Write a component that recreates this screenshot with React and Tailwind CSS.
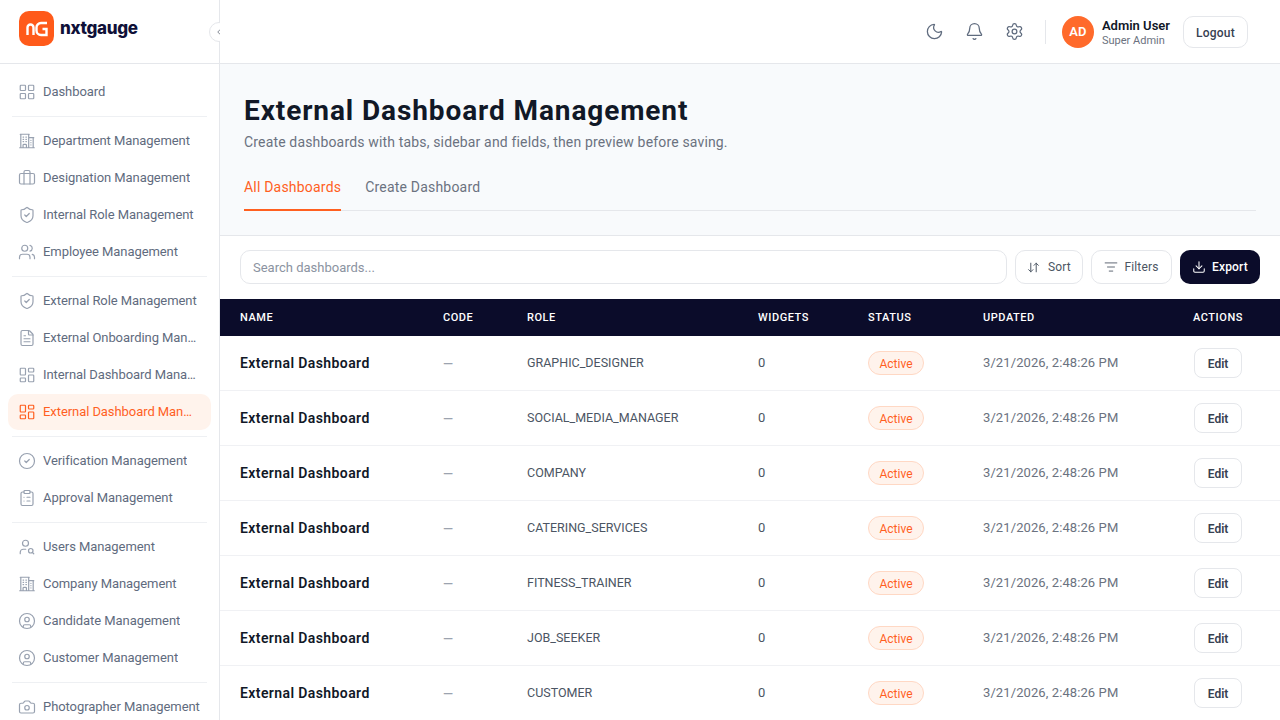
import {
  ArrowDownUp,
  Bell,
  Briefcase,
  Camera,
  ChevronLeft,
  CircleCheck,
  CircleUser,
  ClipboardList,
  Download,
  FileText,
  LayoutDashboard,
  LayoutGrid,
  ListFilter,
  Moon,
  Settings,
  ShieldCheck,
  UserSearch,
  Users,
} from "lucide-react";
import { HiOutlineBuildingOffice2 } from "react-icons/hi2";

const navGroups = [
  [{ label: "Dashboard", icon: LayoutGrid }],
  [
    { label: "Department Management", icon: HiOutlineBuildingOffice2 },
    { label: "Designation Management", icon: Briefcase },
    { label: "Internal Role Management", icon: ShieldCheck },
    { label: "Employee Management", icon: Users },
  ],
  [
    { label: "External Role Management", icon: ShieldCheck },
    { label: "External Onboarding Management", icon: FileText },
    { label: "Internal Dashboard Management", icon: LayoutDashboard },
    { label: "External Dashboard Management", icon: LayoutDashboard, active: true },
  ],
  [
    { label: "Verification Management", icon: CircleCheck },
    { label: "Approval Management", icon: ClipboardList },
  ],
  [
    { label: "Users Management", icon: UserSearch },
    { label: "Company Management", icon: HiOutlineBuildingOffice2 },
    { label: "Candidate Management", icon: CircleUser },
    { label: "Customer Management", icon: CircleUser },
  ],
  [{ label: "Photographer Management", icon: Camera }],
];

const roles = [
  "GRAPHIC_DESIGNER",
  "SOCIAL_MEDIA_MANAGER",
  "COMPANY",
  "CATERING_SERVICES",
  "FITNESS_TRAINER",
  "JOB_SEEKER",
  "CUSTOMER",
];

function NavItem({ item }) {
  const Icon = item.icon;
  return (
    <div
      className={`flex h-9 items-center gap-[7px] rounded-[10px] pl-[10px] text-[13px] tracking-[-0.07px] ${
        item.active ? "bg-[#fff3ec] pr-[14px] text-[#ff5f1f]" : "pr-[10px] text-[#5f6b7e]"
      }`}
    >
      <Icon
        size={18}
        strokeWidth={1.6}
        className={`shrink-0 ${item.active ? "text-[#ff5f1f]" : "text-[#98a1b0]"}`}
      />
      <span className="truncate">{item.label}</span>
    </div>
  );
}

function Sidebar() {
  return (
    <aside className="relative flex w-[220px] shrink-0 flex-col border-r border-[#e5e7eb] bg-white">
      <div className="flex h-[64px] shrink-0 items-center gap-[6px] border-b border-[#e5e7eb] pb-[6px] pl-[19px]">
        <svg width="35" height="35" viewBox="0 0 35 35">
          <rect width="35" height="35" rx="10" fill="#ff5a1a" />
          <path d="M8.500 24V16.500a3 3 0 0 1 6 0V24" fill="none" stroke="#fff" strokeWidth="2.400" />
          <path
            d="M28 12h-6a4.500 4.500 0 0 0-4.500 4.500v3a4.500 4.500 0 0 0 4.500 4.500h5.500v-6h-4"
            fill="none"
            stroke="#fff"
            strokeWidth="2.400"
          />
        </svg>
        <span className="font-['Inter',sans-serif] text-[17px] font-extrabold tracking-[-0.3px] text-[#0f1038]">
          nxtgauge
        </span>
      </div>
      <button className="absolute right-[-10px] top-[22px] flex h-5 w-5 items-center justify-center rounded-full border border-[#e5e7eb] bg-white text-[#6b7280]">
        <ChevronLeft size={10} />
      </button>
      <nav className="flex flex-col overflow-hidden px-2 pt-[10px]">
        {navGroups.map((group, i) => (
          <div key={i} className="flex flex-col">
            {i > 0 && <div className="mx-1 my-[6px] h-px bg-[#eef0f3]" />}
            <div className="flex flex-col gap-px">
              {group.map((item) => (
                <NavItem key={item.label} item={item} />
              ))}
            </div>
          </div>
        ))}
      </nav>
    </aside>
  );
}

function TopBar() {
  return (
    <header className="flex h-[64px] shrink-0 items-center justify-end border-b border-[#e5e7eb] bg-white pr-8">
      <div className="flex items-center gap-[21px] text-[#5f6b7e]">
        <Moon size={19} strokeWidth={1.6} />
        <Bell size={19} strokeWidth={1.6} />
        <Settings size={19} strokeWidth={1.6} />
      </div>
      <div className="ml-[21px] mr-4 h-6 w-px bg-[#e5e7eb]" />
      <div className="flex h-8 w-8 items-center justify-center rounded-full bg-[#ff6a2b] text-[13px] font-semibold text-white">
        AD
      </div>
      <div className="ml-2 mr-[13px] flex flex-col pt-[2px]">
        <span className="text-[13px] font-semibold leading-[17px] text-[#111827]">Admin User</span>
        <span className="text-[11px] leading-[14px] text-[#6b7280]">Super Admin</span>
      </div>
      <button className="h-8 w-[65px] rounded-[10px] border border-[#e5e7eb] bg-white pt-[2px] text-[12px] font-medium tracking-[0.2px] text-[#374151]">
        Logout
      </button>
    </header>
  );
}

function Toolbar() {
  return (
    <div className="flex h-[63px] shrink-0 items-start gap-2 bg-white px-5 pt-[14px] text-[12px] tracking-[0.15px]">
      <div className="flex h-[34px] flex-1 items-center rounded-[10px] border border-[#e5e7eb] px-3 pt-px text-[13px] tracking-normal text-[#8b93a1]">
        Search dashboards...
      </div>
      <button className="flex h-[34px] w-[68px] items-center justify-center gap-2 rounded-[10px] border border-[#e5e7eb] text-[#4b5563]">
        <ArrowDownUp size={13} strokeWidth={1.8} />
        Sort
      </button>
      <button className="flex h-[34px] w-[81px] items-center justify-center gap-[6px] rounded-[10px] border border-[#e5e7eb] text-[#4b5563]">
        <ListFilter size={14} strokeWidth={1.5} />
        Filters
      </button>
      <button className="flex h-[34px] w-[80px] items-center justify-center gap-[6px] rounded-[10px] bg-[#0b0c2a] font-medium text-white">
        <Download size={14} strokeWidth={1.8} />
        Export
      </button>
    </div>
  );
}

function DashboardTable() {
  return (
    <table className="w-full table-fixed border-separate border-spacing-0 text-left">
      <thead>
        <tr className="h-[37px] bg-[#0b0c2a] text-[11px] tracking-[0.55px] text-white">
          <th className="w-[203px] pl-5 pt-px font-medium">NAME</th>
          <th className="w-[84px] pl-5 pt-px font-medium">CODE</th>
          <th className="w-[231px] pl-5 pt-px font-medium">ROLE</th>
          <th className="w-[110px] pl-5 pt-px font-medium">WIDGETS</th>
          <th className="w-[115px] pl-5 pt-px font-medium">STATUS</th>
          <th className="w-[210px] pl-5 pt-px font-medium">UPDATED</th>
          <th className="pl-5 pt-px font-medium">ACTIONS</th>
        </tr>
      </thead>
      <tbody>
        {roles.map((role) => (
          <tr key={role} className="h-[55px] bg-white text-[13px] text-[#4b5563] [&>td]:border-b [&>td]:border-[#f0f1f4]">
            <td className="pl-5 pt-px text-[14px] font-semibold tracking-[0.4px] text-[#111827]">External Dashboard</td>
            <td className="pl-5 pt-px font-medium text-[#9ca3af]">—</td>
            <td className="pl-5 text-[12.5px]">{role}</td>
            <td className="pl-5">0</td>
            <td className="pl-5">
              <span className="inline-flex h-6 w-14 items-center justify-center rounded-full border border-[#ffd8c4] bg-[#fff3ec] pt-px text-[12px] text-[#ff5f1f]">
                Active
              </span>
            </td>
            <td className="pl-5 tracking-[0.1px] text-[#6b7280]">3/21/2026, 2:48:26 PM</td>
            <td className="pl-[21px]">
              <button className="h-[30px] w-12 rounded-[8px] border border-[#e5e7eb] bg-white pt-px text-[12px] font-semibold text-[#374151]">
                Edit
              </button>
            </td>
          </tr>
        ))}
      </tbody>
    </table>
  );
}

export default function App() {
  return (
    <div className="flex h-screen w-full overflow-hidden bg-white font-['Roboto',sans-serif]">
      <Sidebar />
      <main className="relative z-10 flex min-w-0 flex-1 flex-col overflow-hidden">
        <TopBar />
        <section className="h-[172px] shrink-0 border-b border-[#e5e7eb] bg-[#f8fafc] px-6 pt-[29px]">
          <h1 className="text-[28px] font-bold leading-[36px] tracking-[0.9px] text-[#111827]">
            External Dashboard Management
          </h1>
          <p className="mt-[3px] text-[14px] leading-5 tracking-[0.16px] text-[#6b7280]">
            Create dashboards with tabs, sidebar and fields, then preview before saving.
          </p>
          <div className="mt-[22px] flex gap-6 border-b border-[#e5e7eb] text-[14px] tracking-[0.2px]">
            <div className="-mb-px border-b-2 border-[#ff5f1f] pb-[12px] pt-[3px] leading-5 text-[#ff5f1f]">
              All Dashboards
            </div>
            <div className="pb-[12px] pt-[3px] leading-5 text-[#6b7280]">Create Dashboard</div>
          </div>
        </section>
        <Toolbar />
        <DashboardTable />
      </main>
    </div>
  );
}
